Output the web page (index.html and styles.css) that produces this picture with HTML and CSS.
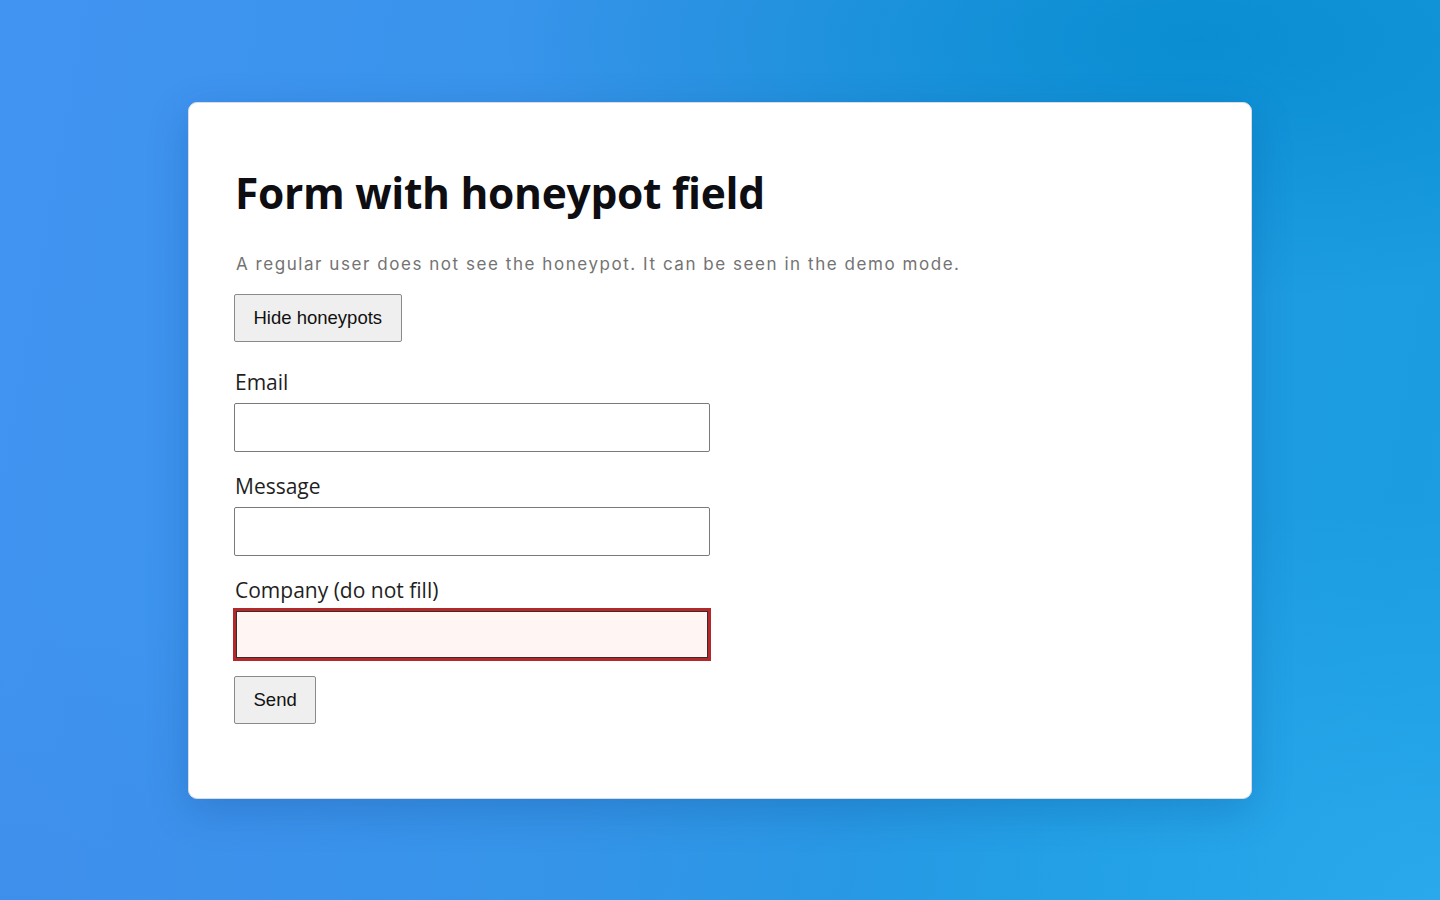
FILE: index.html
```html
<!DOCTYPE html>
<html lang="en">
<head>
<meta charset="utf-8">
<title>Form with honeypot field</title>
<link rel="stylesheet" href="styles.css">
</head>
<body>
<main class="card">
  <h1 class="title">Form with honeypot field</h1>
  <p class="subtitle">A regular user does not see the honeypot. It can be seen in the demo mode.</p>
  <button class="btn" type="button">Hide honeypots</button>
  <form class="form">
    <div class="field">
      <label class="label" for="email">Email</label>
      <input class="input" id="email" type="text">
    </div>
    <div class="field">
      <label class="label" for="message">Message</label>
      <input class="input" id="message" type="text">
    </div>
    <div class="field">
      <label class="label" for="company">Company (do not fill)</label>
      <input class="input input-honeypot" id="company" type="text">
    </div>
    <button class="btn btn-send" type="button">Send</button>
  </form>
</main>
</body>
</html>
```
FILE: styles.css
```css
html, body {
  margin: 0;
  padding: 0;
  height: 100%;
}
body {
  display: flex;
  align-items: center;
  justify-content: center;
  min-height: 100vh;
  background:
    radial-gradient(ellipse 700px 260px at 1200px 40px, rgba(8,140,208,0.9), rgba(8,140,208,0) 100%),
    radial-gradient(ellipse 600px 400px at 1440px 900px, rgba(44,170,238,0.9), rgba(44,170,238,0) 100%),
    radial-gradient(ellipse 500px 300px at 0px 900px, rgba(62,140,232,0.6), rgba(62,140,232,0) 100%),
    linear-gradient(100deg, #4294f2 0%, #3594e8 45%, #1f9be2 75%, #1a9de0 100%);
  font-family: "Open Sans", "Noto Sans", sans-serif;
}
.card {
  box-sizing: border-box;
  width: 1064px;
  height: 697px;
  background: #ffffff;
  border: 1px solid #d9dde2;
  border-radius: 9px;
  padding: 48px 47px 48px 45px;
  box-shadow: 0 12px 40px rgba(10, 50, 120, 0.22);
}
.title {
  margin: 14px 0 0 1px;
  font-family: "Open Sans", "Noto Sans", sans-serif;
  font-weight: 700;
  font-size: 42.5px;
  line-height: 56px;
  color: #0d0d12;
  letter-spacing: -0.3px;
}
.subtitle {
  margin: 31px 0 18px 2px;
  font-family: Inter, Roboto, sans-serif;
  font-size: 17px;
  line-height: 24px;
  letter-spacing: 1.55px;
  color: #737373;
}
.btn {
  display: block;
  align-self: flex-start;
  box-sizing: border-box;
  height: 48px;
  padding: 0 18.5px;
  background: #efefef;
  border: 1px solid #8a8a8a;
  border-radius: 2px;
  font-family: "Liberation Sans", Arial, sans-serif;
  font-size: 18.5px;
  color: #111;
}
.form {
  display: flex;
  flex-direction: column;
  gap: 20px;
  margin-top: 26px;
}
.field {
  display: flex;
  flex-direction: column;
  align-items: flex-start;
}
.label {
  font-family: "Open Sans", "Noto Sans", sans-serif;
  font-size: 21px;
  line-height: 28px;
  color: #1f1f1f;
  margin: 0 0 7px 1px;
}
.input {
  box-sizing: border-box;
  width: 476px;
  height: 49px;
  border: 1px solid #7a7a7a;
  border-radius: 2px;
  background: #fff;
  margin: 0;
}
.input-honeypot {
  width: 472px;
  height: 47px;
  margin: 0 0 0 2px;
  background: #fff5f2;
  border: 1px solid #3a2a2a;
  border-radius: 0;
  outline: 3px solid #b3282b;
}
.btn-send {
  margin-top: -2px;
}
```
